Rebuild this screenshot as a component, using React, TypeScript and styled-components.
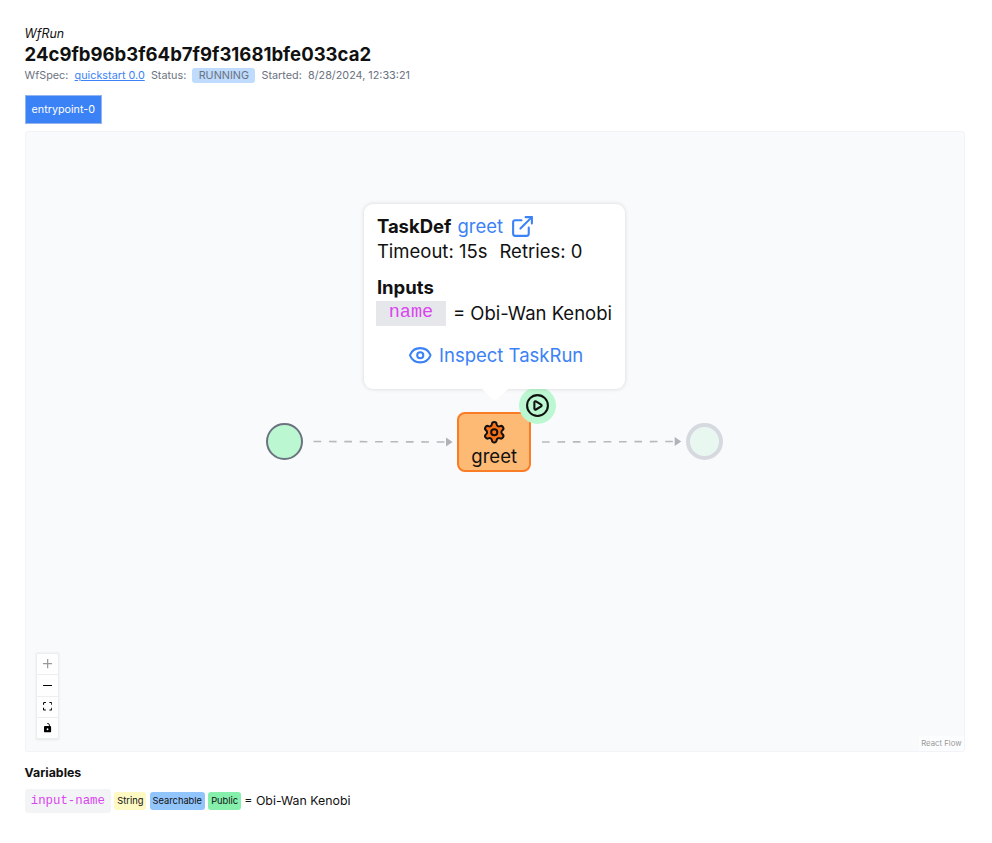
import React from "react";
import styled, { createGlobalStyle } from "styled-components";
import { CirclePlay, ExternalLink, Eye, Settings } from "lucide-react";

const GlobalStyle = createGlobalStyle`
  *, *::before, *::after { box-sizing: border-box; }
  body {
    margin: 0;
    background: #fff;
    color: #111;
    font-family: Inter, "Liberation Sans", sans-serif;
  }
`;

const Page = styled.main`
  display: flex;
  flex-direction: column;
  align-items: flex-start;
  width: 992px;
  height: 843px;
  padding: 24px 27px 0 24.6px;
  overflow: hidden;
`;

const Kind = styled.span`
  font-size: 12.4px;
  line-height: 19px;
  font-style: italic;
`;

const RunId = styled.h1`
  margin: 0;
  font-size: 18.54px;
  line-height: 23px;
  font-weight: 700;
  white-space: nowrap;
`;

const Meta = styled.div`
  display: flex;
  align-items: center;
  gap: 6.2px;
  height: 19px;
  font-size: 10.82px;
  line-height: 15.4px;
  color: #6b7280;
  white-space: nowrap;
`;

const SpecLink = styled.a`
  color: #3b82f6;
  text-decoration: underline;
`;

const Status = styled.span`
  padding: 0 6.2px;
  border-radius: 3px;
  background: #bfdbfe;
`;

const ThreadTab = styled.button`
  height: 29px;
  margin: 10px 0 7px;
  padding: 0 6px;
  border: 1px solid #93b4ee;
  background: #3b82f6;
  color: #fff;
  font: 400 10.75px/16px Inter, sans-serif;
`;

const Canvas = styled.section`
  position: relative;
  width: 940.4px;
  height: 621px;
  border: 1px solid #f1f3f6;
  border-radius: 3px;
  background: #f9fafc;
`;

const Edges = styled.svg`
  position: absolute;
  inset: 0;
  width: 100%;
  height: 100%;
`;

const Terminal = styled.div<{ $x: number; $faded?: boolean }>`
  position: absolute;
  left: ${(p) => p.$x}px;
  top: 291px;
  width: 37px;
  height: 37px;
  border-radius: 50%;
  border: ${(p) => (p.$faded ? "4px solid #d6d9df" : "2px solid #6b7280")};
  background: ${(p) => (p.$faded ? "#e8f8f0" : "#bbf7d0")};
`;

const TaskNode = styled.div`
  position: absolute;
  left: 431.6px;
  top: 280px;
  width: 74px;
  height: 60px;
  display: flex;
  flex-direction: column;
  align-items: center;
  padding-top: 6px;
  border: 2px solid #f97d26;
  border-radius: 8px;
  background: #fdba74;
  font-size: 18.5px;
  line-height: 23px;

  svg {
    margin-left: 1px;
  }
`;

const RunBadge = styled.div`
  position: absolute;
  left: 493.5px;
  top: 254.5px;
  width: 37px;
  height: 37px;
  display: grid;
  place-items: center;
  border-radius: 50%;
  background: #bbf7d0;
`;

const Popover = styled.div`
  position: absolute;
  left: 338.8px;
  top: 71.5px;
  width: 261px;
  height: 185px;
  display: flex;
  flex-direction: column;
  padding: 10px 11.5px 10px 12.5px;
  border-radius: 9px;
  background: #fff;
  box-shadow: 0 0 4px rgba(0, 0, 0, 0.15);
  font-size: 18.5px;
  line-height: 25px;
  white-space: nowrap;

  &::after {
    content: "";
    position: absolute;
    left: 118px;
    top: 185px;
    border: 13px solid transparent;
    border-top: 12px solid #fff;
    border-bottom: 0;
  }
`;

const PopoverRow = styled.div<{ $gap: number }>`
  display: flex;
  align-items: center;
  gap: ${(p) => p.$gap}px;
  height: 25px;
`;

const InputsTitle = styled.strong`
  margin-top: 11px;
  line-height: 25px;
`;

const InputsRow = styled(PopoverRow)`
  margin-top: 1px;
`;

const InputName = styled.code`
  width: 70px;
  height: 25px;
  margin-left: -1px;
  background: #e5e7eb;
  color: #d946ef;
  font-family: "Liberation Mono", monospace;
  font-size: 18.5px;
  line-height: 23.5px;
  text-align: center;
`;

const TaskLink = styled.a`
  display: flex;
  align-items: center;
  gap: 7px;
  color: #3b82f6;
`;

const InspectLink = styled(TaskLink)`
  justify-content: center;
  margin-top: 17px;
`;

const Controls = styled.div`
  position: absolute;
  left: 11.4px;
  bottom: 12px;
  width: 21px;
  display: flex;
  flex-direction: column;
  box-shadow: 0 0 2px 1px rgba(0, 0, 0, 0.08);
`;

const ControlButton = styled.button<{ $disabled?: boolean }>`
  display: grid;
  place-items: center;
  height: 21.25px;
  padding: 0;
  border: 0;
  border-bottom: 1px solid #eee;
  background: #fefefe;

  svg {
    width: 9.3px;
    max-height: 9.3px;
    fill: #000;
    fill-opacity: ${(p) => (p.$disabled ? 0.4 : 1)};
  }
`;

const Attribution = styled.span`
  position: absolute;
  right: 0;
  bottom: 0;
  padding: 2px 2.5px;
  background: rgba(255, 255, 255, 0.5);
  color: #999;
  font-size: 7.75px;
  line-height: 11px;
`;

const VariablesTitle = styled.h2`
  margin: 12px 0 6px;
  font-size: 12.35px;
  line-height: 18.5px;
  font-weight: 700;
`;

const VariableRow = styled.div`
  display: flex;
  align-items: center;
  gap: 3.2px;
  font-size: 12.35px;
  line-height: 18.5px;
`;

const VariableName = styled.code`
  padding: 3px 6.2px;
  border-radius: 3px;
  background: #f3f4f6;
  color: #d946ef;
  font-family: "Liberation Mono", monospace;
`;

const Tag = styled.span<{ $color: string }>`
  padding: 3px;
  border-radius: 3px;
  background: ${(p) => p.$color};
  font-size: 9.3px;
  line-height: 12.3px;
`;

const controls = [
  { label: "zoom in", box: "0 0 32 32", path: "M32 18.133H18.133V32h-4.266V18.133H0v-4.266h13.867V0h4.266v13.867H32z", disabled: true },
  { label: "zoom out", box: "0 0 32 5", path: "M0 0h32v4.2H0z" },
  { label: "fit view", box: "0 0 32 30", path: "M3.692 4.63c0-.53.4-.938.939-.938h5.215V0H4.708C2.13 0 0 2.054 0 4.63v5.216h3.692V4.631zM27.354 0h-5.2v3.692h5.17c.53 0 .984.4.984.939v5.215H32V4.631A4.624 4.624 0 0027.354 0zm.954 24.83c0 .532-.4.94-.939.94h-5.215v3.768h5.215c2.577 0 4.631-2.13 4.631-4.707v-5.139h-3.692v5.139zm-23.677.94c-.531 0-.939-.4-.939-.94v-5.138H0v5.139c0 2.577 2.13 4.707 4.708 4.707h5.138V25.77H4.631z" },
  { label: "toggle interactivity", box: "0 0 25 32", path: "M21.333 10.667H19.81V7.619C19.81 3.429 16.38 0 12.19 0c-4.114 1.828-1.37 2.133.305 2.438 1.676.305 4.42 2.59 4.42 5.181v3.048H3.047A3.056 3.056 0 000 13.714v15.238A3.056 3.056 0 003.048 32h18.285a3.056 3.056 0 003.048-3.048V13.714a3.056 3.056 0 00-3.048-3.047zM12.19 24.533a3.056 3.056 0 01-3.047-3.047 3.056 3.056 0 013.047-3.048 3.056 3.056 0 013.048 3.048 3.056 3.056 0 01-3.048 3.047z" },
];

const tags = [
  { label: "String", color: "#fef9c3" },
  { label: "Searchable", color: "#93c5fd" },
  { label: "Public", color: "#86efac" },
];

export default function App() {
  return (
    <>
      <GlobalStyle />
      <Page>
        <Kind>WfRun</Kind>
        <RunId>24c9fb96b3f64b7f9f31681bfe033ca2</RunId>
        <Meta>
          <span>WfSpec:</span>
          <SpecLink>quickstart 0.0</SpecLink>
          <span>Status:</span>
          <Status>RUNNING</Status>
          <span>Started:</span>
          <span>8/28/2024, 12:33:21</span>
        </Meta>
        <ThreadTab>entrypoint-0</ThreadTab>

        <Canvas>
          <Edges>
            <g stroke="#b8b9bd" strokeWidth="1.6" strokeDasharray="7.7 7.7">
              <path d="M287.5 309.5L422 310" />
              <path d="M516 310L650 309.5" />
            </g>
            <path d="M420 305.5l6.5 4.5-6.5 4.5zM648.7 305l6.5 4.5-6.5 4.5z" fill="#b1b1b7" />
          </Edges>
          <Terminal $x={240} />
          <TaskNode>
            <Settings size={24.5} fill="#f97316" />
            greet
          </TaskNode>
          <RunBadge>
            <CirclePlay size={25} />
          </RunBadge>
          <Terminal $x={660.5} $faded />

          <Popover>
            <PopoverRow $gap={6}>
              <strong>TaskDef</strong>
              <TaskLink>
                greet <ExternalLink size={25} />
              </TaskLink>
            </PopoverRow>
            <PopoverRow $gap={12}>
              <span>Timeout: 15s</span>
              <span>Retries: 0</span>
            </PopoverRow>
            <InputsTitle>Inputs</InputsTitle>
            <InputsRow $gap={7}>
              <InputName>name</InputName>
              <span>= Obi-Wan Kenobi</span>
            </InputsRow>
            <InspectLink>
              <Eye size={24.5} />
              Inspect TaskRun
            </InspectLink>
          </Popover>

          <Controls>
            {controls.map((c) => (
              <ControlButton key={c.label} aria-label={c.label} $disabled={c.disabled}>
                <svg viewBox={c.box}>
                  <path d={c.path} />
                </svg>
              </ControlButton>
            ))}
          </Controls>
          <Attribution>React Flow</Attribution>
        </Canvas>

        <VariablesTitle>Variables</VariablesTitle>
        <VariableRow>
          <VariableName>input-name</VariableName>
          {tags.map((t) => (
            <Tag key={t.label} $color={t.color}>
              {t.label}
            </Tag>
          ))}
          <span>= Obi-Wan Kenobi</span>
        </VariableRow>
      </Page>
    </>
  );
}
